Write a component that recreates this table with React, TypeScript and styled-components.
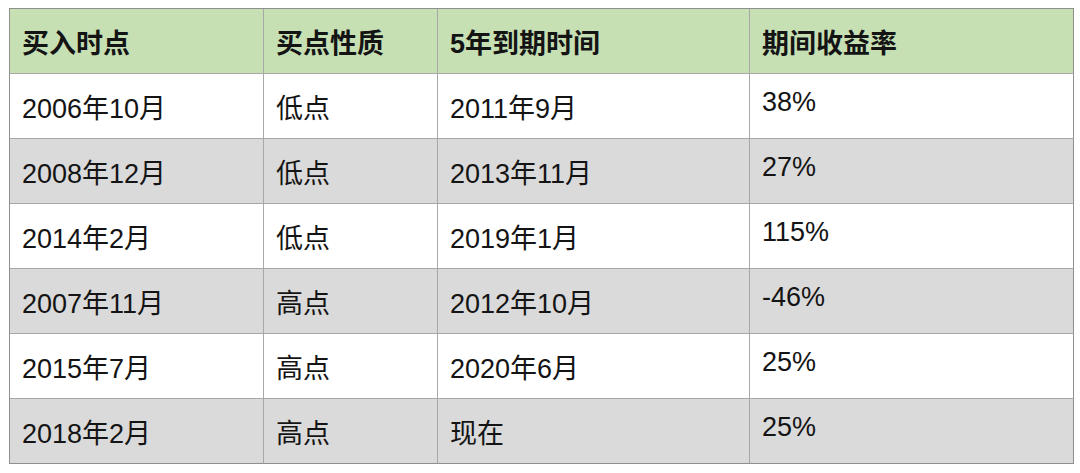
import React from "react";
import styled, { createGlobalStyle } from "styled-components";

const GlobalStyle = createGlobalStyle`
  html, body {
    margin: 0;
    padding: 0;
    background: #ffffff;
  }
  body {
    font-family: "Liberation Sans", "Noto Sans CJK SC", sans-serif;
  }
`;

const Page = styled.div`
  padding: 8px 0 0 9px;
  width: 1080px;
  height: 473px;
  box-sizing: border-box;
  background: #ffffff;
`;

const Grid = styled.div`
  display: grid;
  grid-template-columns: 254px 174px 312px 324px;
  grid-auto-rows: 65px;
  width: 1065px;
  box-sizing: border-box;
  border-top: 1px solid #8f8f8f;
  border-left: 1px solid #8f8f8f;
`;

type Tone = "head" | "white" | "gray";

const bg: Record<Tone, string> = {
  head: "#c6e0b4",
  white: "#ffffff",
  gray: "#dadada",
};

const Cell = styled.div<{ $tone: Tone; $raised?: boolean; $last?: boolean; $bottom?: boolean }>`
  display: flex;
  align-items: center;
  box-sizing: border-box;
  padding: 0 11px ${(p) => (p.$raised ? "8px" : "0")} 12px;
  background: ${(p) => bg[p.$tone]};
  border-right: 1px solid ${(p) => (p.$last ? "#8f8f8f" : "#a8a8a8")};
  border-bottom: 1px solid ${(p) => (p.$bottom ? "#8f8f8f" : "#a8a8a8")};
  color: #141414;
  font-size: 27px;
  font-weight: ${(p) => (p.$tone === "head" ? 700 : 400)};
  white-space: nowrap;
`;

const headers = ["买入时点", "买点性质", "5年到期时间", "期间收益率"];

const rows: string[][] = [
  ["2006年10月", "低点", "2011年9月", "38%"],
  ["2008年12月", "低点", "2013年11月", "27%"],
  ["2014年2月", "低点", "2019年1月", "115%"],
  ["2007年11月", "高点", "2012年10月", "-46%"],
  ["2015年7月", "高点", "2020年6月", "25%"],
  ["2018年2月", "高点", "现在", "25%"],
];

export default function App() {
  return (
    <Page>
      <GlobalStyle />
      <Grid>
        {headers.map((h, i) => (
          <Cell key={h} $tone="head" $last={i === 3}>
            {h}
          </Cell>
        ))}
        {rows.map((r, ri) =>
          r.map((c, ci) => (
            <Cell
              key={`${ri}-${ci}`}
              $tone={ri % 2 === 0 ? "white" : "gray"}
              $raised={ci === 3}
              $last={ci === 3}
              $bottom={ri === rows.length - 1}
            >
              {c}
            </Cell>
          ))
        )}
      </Grid>
    </Page>
  );
}
